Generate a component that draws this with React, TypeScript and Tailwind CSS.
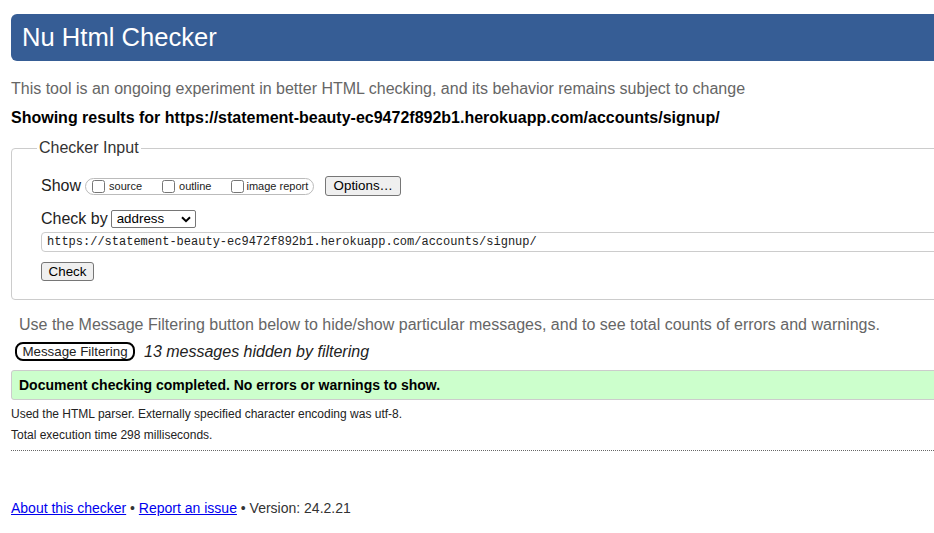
import React from "react";

const sans = { fontFamily: '"Liberation Sans", Arial, sans-serif' };

const Btn: React.FC<{ children: React.ReactNode; className?: string }> = ({ children, className = "" }) => (
  <span
    className={`inline-flex items-center justify-center border border-[#767676] rounded-[3px] bg-[#efefef] text-[13.33px] text-black leading-none ${className}`}
  >
    {children}
  </span>
);

const Check: React.FC<{ label: string; className?: string; gap?: string }> = ({ label, className = "", gap = "ml-[4px]" }) => (
  <label className={`flex items-center ${className}`}>
    <input type="checkbox" className="m-0 w-[13px] h-[13px]" readOnly />
    <span className={`${gap} text-[11px] leading-[13px] text-[#222]`}>{label}</span>
  </label>
);

export default function App() {
  return (
    <div className="w-[934px] h-[533px] overflow-hidden bg-white" style={sans}>
      <div className="w-[1000px] pl-[11px]">
        <header className="mt-[14px] h-[47px] rounded-[6px] bg-[#365d95] pl-[11px] pt-[9px]">
          <h1 className="text-[25.6px] leading-[29px] text-white font-normal">Nu Html Checker</h1>
        </header>

        <p className="mt-[19px] text-[16px] leading-[18px] text-[#666]">
          This tool is an ongoing experiment in better HTML checking, and its behavior remains subject to change
        </p>
        <p className="mt-[11px] text-[16px] leading-[18px] font-bold text-black">
          Showing results for https://statement-beauty-ec9472f892b1.herokuapp.com/accounts/signup/
        </p>

        <fieldset className="mt-[12px] border border-[#ccc] rounded-[4px] pl-[29px] pt-[18px] pb-[18px]">
          <legend className="-ml-[4px] px-[2px] text-[16px] leading-[18px] text-[#333]">Checker Input</legend>

          <div className="flex items-center h-[22px]">
            <span className="text-[16px] leading-[18px] text-[#222]">Show</span>
            <div className="ml-[4px] flex items-center h-[17px] border border-[#bbb] rounded-full pl-[6px] pr-[5px]">
              <Check label="source" />
              <Check label="outline" className="ml-[20px]" />
              <Check label="image report" className="ml-[20px]" gap="ml-[2px]" />
            </div>
            <Btn className="ml-[11px] w-[76px] h-[20px]">Options…</Btn>
          </div>

          <div className="mt-[12px] flex items-center h-[20px]">
            <span className="text-[16px] leading-[18px] text-[#222]">Check by</span>
            <div className="ml-[3px] flex items-center justify-between w-[85px] h-[18px] border border-[#767676] rounded-[2px] pl-[5px] pr-[4px] bg-white">
              <span className="text-[13.33px] leading-none text-black">address</span>
              <svg width="10" height="7" viewBox="0 0 10 7">
                <polyline points="1,1.2 5,5.2 9,1.2" fill="none" stroke="#000" strokeWidth="2" />
              </svg>
            </div>
          </div>

          <div
            className="mt-[3px] h-[20px] flex items-center border border-[#ccc] rounded-l-[4px] pl-[5px] text-[12px] text-[#222]"
            style={{ fontFamily: '"Liberation Mono", "Courier New", monospace' }}
          >
            https://statement-beauty-ec9472f892b1.herokuapp.com/accounts/signup/
          </div>

          <div className="mt-[10px] flex">
            <Btn className="w-[53px] h-[19px]">Check</Btn>
          </div>
        </fieldset>

        <p className="mt-[16px] pl-[8px] text-[16px] leading-[18px] text-[#666]">
          Use the Message Filtering button below to hide/show particular messages, and to see total counts of errors and warnings.
        </p>

        <div className="mt-[8px] flex items-center h-[19px] pl-[4px]">
          <span className="inline-flex items-center justify-center w-[120px] h-[19px] border-2 border-black rounded-[8px] bg-white text-[13.33px] leading-none text-[#222]">
            Message Filtering
          </span>
          <span className="ml-[9px] text-[16px] leading-[18px] italic text-[#222]">13 messages hidden by filtering</span>
        </div>

        <div className="mt-[9px] h-[30px] flex items-center border border-[#ccc] rounded-[3px] bg-[#ccffcc] pl-[7px]">
          <span className="text-[14px] leading-[16px] font-bold text-black">
            Document checking completed. No errors or warnings to show.
          </span>
        </div>

        <p className="mt-[7px] text-[12px] leading-[14px] text-[#222]">
          Used the HTML parser. Externally specified character encoding was utf-8.
        </p>
        <p className="mt-[7px] text-[12px] leading-[14px] text-[#222]">Total execution time 298 milliseconds.</p>

        <div className="mt-[8px] border-t border-dotted border-[#666]" />

        <p className="mt-[49px] text-[14px] leading-[16px] text-[#333]">
          <a href="#" className="text-[#0000ee] underline">About this checker</a>
          {" • "}
          <a href="#" className="text-[#0000ee] underline">Report an issue</a>
          {" • Version: 24.2.21"}
        </p>
      </div>
    </div>
  );
}
